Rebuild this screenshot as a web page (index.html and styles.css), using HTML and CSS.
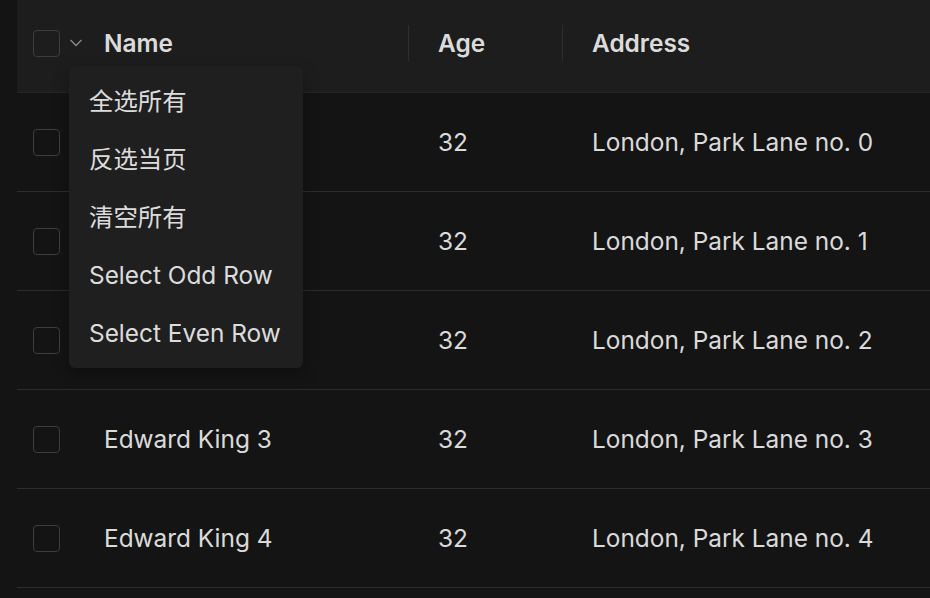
FILE: index.html
```html
<!DOCTYPE html>
<html lang="en">
<head>
  <meta charset="UTF-8">
  <title>Table - selection</title>
  <link rel="stylesheet" href="styles.css">
</head>
<body>
  <div class="table">
    <!-- Header -->
    <div class="row head">
      <div class="cell sel">
        <span class="checkbox"></span>
        <span class="sel-arrow">
          <svg width="14" height="10" viewBox="0 0 14 10"><path d="M1.5 2 L7 7.5 L12.5 2" fill="none" stroke="currentColor" stroke-width="1.3"/></svg>
        </span>
      </div>
      <div class="cell name">Name</div>
      <div class="cell age sep">Age</div>
      <div class="cell addr sep">Address</div>
    </div>

    <div class="row"><div class="cell sel"><span class="checkbox"></span></div><div class="cell name">Edward King 0</div><div class="cell age">32</div><div class="cell addr">London, Park Lane no. 0</div></div>
    <div class="row"><div class="cell sel"><span class="checkbox"></span></div><div class="cell name">Edward King 1</div><div class="cell age">32</div><div class="cell addr">London, Park Lane no. 1</div></div>
    <div class="row"><div class="cell sel"><span class="checkbox"></span></div><div class="cell name">Edward King 2</div><div class="cell age">32</div><div class="cell addr">London, Park Lane no. 2</div></div>
    <div class="row"><div class="cell sel"><span class="checkbox"></span></div><div class="cell name">Edward King 3</div><div class="cell age">32</div><div class="cell addr">London, Park Lane no. 3</div></div>
    <div class="row"><div class="cell sel"><span class="checkbox"></span></div><div class="cell name">Edward King 4</div><div class="cell age">32</div><div class="cell addr">London, Park Lane no. 4</div></div>
  </div>

  <!-- Selection dropdown -->
  <ul class="dropdown">
    <li>全选所有</li>
    <li>反选当页</li>
    <li>清空所有</li>
    <li>Select Odd Row</li>
    <li>Select Even Row</li>
  </ul>
</body>
</html>
```

FILE: styles.css
```css
html, body {
  margin: 0;
  padding: 0;
}

body {
  background-color: #141414;
  color: rgba(255, 255, 255, 0.86);
  font-family: Inter, "Noto Sans CJK SC", sans-serif;
  font-size: 24.4px;
  width: 930px;
  height: 598px;
  overflow: hidden;
  position: relative;
  padding-left: 17px;
  box-sizing: border-box;
}

/* Table */
.table {
  width: 100%;
}

.row {
  display: grid;
  grid-template-columns: 70px 322px 154px 1fr;
  height: 99px;
  border-bottom: 1px solid #2c2c2c;
  box-sizing: border-box;
}

.row.head {
  height: 93px;
  background-color: #1d1d1d;
  border-bottom-color: #262626;
  font-weight: 600;
}

.row.head .cell {
  padding-bottom: 6px;
}

.cell {
  display: flex;
  align-items: center;
  position: relative;
  box-sizing: border-box;
}

.cell.sel {
  padding-left: 16px;
}

.cell.name {
  padding-left: 17px;
}

.cell.age,
.cell.addr {
  padding-left: 29px;
}

.cell.sep::before {
  content: "";
  position: absolute;
  left: -1px;
  top: 25px;
  width: 1px;
  height: 36px;
  background-color: #2e2e2e;
}

.checkbox {
  width: 27px;
  height: 27px;
  border: 1px solid #3d3d3d;
  border-radius: 4px;
  box-sizing: border-box;
  flex: none;
}

.sel-arrow {
  color: #8a8a8a;
  margin-left: 9px;
  display: flex;
}

/* Dropdown */
.dropdown {
  position: absolute;
  left: 69px;
  top: 66px;
  width: 234px;
  margin: 0;
  padding: 6px 0;
  list-style: none;
  background-color: #1f1f1f;
  border-radius: 6px;
  box-shadow: 0 6px 16px rgba(0, 0, 0, 0.3);
  box-sizing: border-box;
}

.dropdown li {
  height: 58px;
  line-height: 58px;
  padding-left: 20px;
  white-space: nowrap;
}
```
